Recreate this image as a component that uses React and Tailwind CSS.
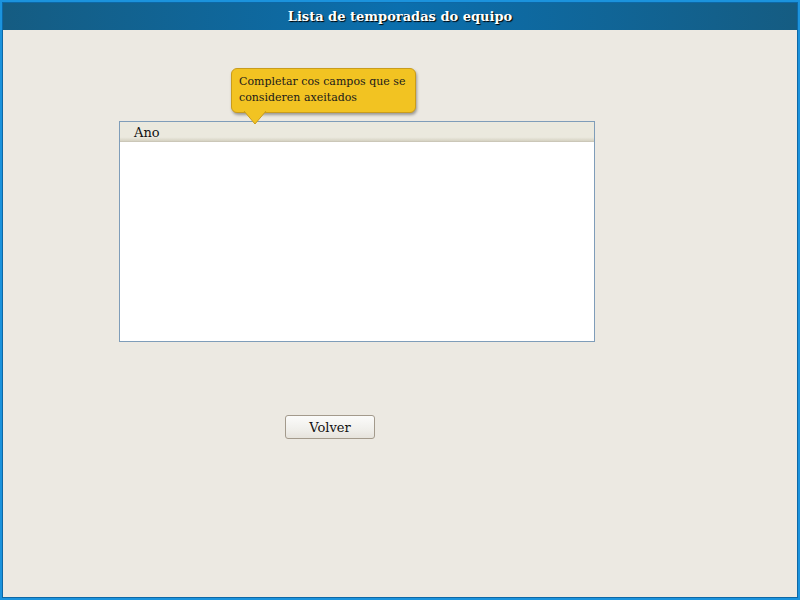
export default function App() {
  const serif = { fontFamily: '"DejaVu Serif", serif' };
  return (
    <div className="w-[800px] h-[600px] border-2 border-[#1b93dd] bg-[#0d68a6] p-px flex flex-col" style={serif}>
      <div className="h-[27px] shrink-0 flex items-center justify-center bg-[linear-gradient(to_right,#155c82,#0b6fae_50%,#155c82)] text-white font-bold text-[13px] [text-shadow:1px_1px_1px_#000]">
        Lista de temporadas do equipo
      </div>
      <div className="flex-1 bg-[#ece9e2] relative">
        <div className="pt-[91px] pl-[116px]">
          <div className="relative w-[476px] h-[221px] border border-[#7f9db9] bg-white flex flex-col">
            <div className="h-[20px] pt-[2px] bg-[linear-gradient(#ebe9de,#ebe9de_80%,#d6d2c2)] border-b border-[#cbc7b8] flex items-center pl-[14px] text-[13px] text-[#111]">
              Ano
            </div>
            <div className="absolute left-[111px] top-[-54px] z-10">
              <div className="relative w-[185px] h-[45px] rounded-[6px] bg-[#f2c322] border border-[#c99c1c] shadow-[1px_2px_3px_rgba(0,0,0,0.35)] px-[7px] pt-[5px] text-[11px] leading-[16px] text-[#1a1a1a]">
                Completar cos campos que se
                <br />
                consideren axeitados
              </div>
              <svg className="absolute left-[12px] top-[43px]" width="24" height="16" viewBox="0 0 24 16">
                <path d="M1 0 L12 13 L23 0" fill="#f2c322" stroke="#c99c1c" strokeWidth="1" />
                <rect x="2" y="-1" width="20" height="2" fill="#f2c322" />
              </svg>
            </div>
          </div>
        </div>
        <div className="mt-[73px] pl-[282px]">
          <button className="w-[90px] h-[24px] pt-[2px] rounded-[3px] border border-[#a39a8c] bg-[linear-gradient(#fbfbfa,#f0efeb_60%,#e6e3dc)] text-[13px] text-[#111] flex items-center justify-center" style={serif}>
            Volver
          </button>
        </div>
      </div>
    </div>
  );
}
